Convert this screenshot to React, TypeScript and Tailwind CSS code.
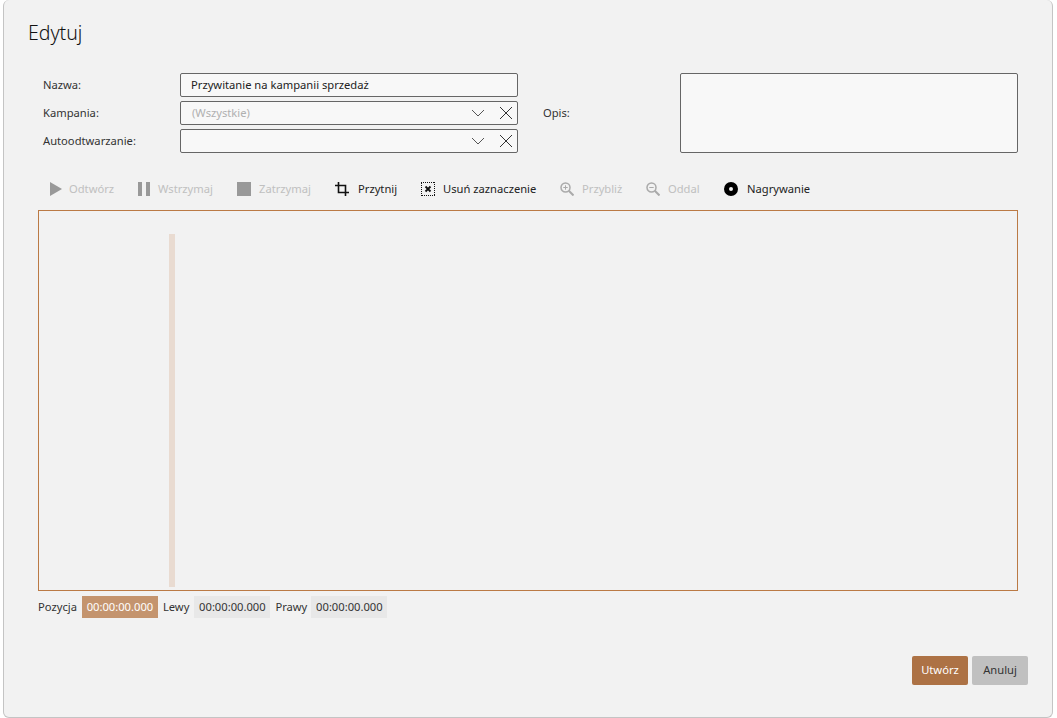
import type { ReactNode } from "react";

const FieldLabel = ({ children }: { children: ReactNode }) => (
  <span className="w-[137px] text-[11.2px] text-[#333]">{children}</span>
);

const ComboBox = ({ value }: { value?: string }) => (
  <div className="flex items-center h-[24px] w-[338px] rounded-[2px] border border-[#666] bg-[#f8f8f8] pl-[11px]">
    <span className="flex-1 text-[11.2px] text-[#b0b0b0]">{value}</span>
    <svg viewBox="0 0 14 14" className="w-[14px] h-[14px] mr-[14px]">
      <path d="M1 4l6 6 6-6" fill="none" stroke="#555" />
    </svg>
    <svg viewBox="0 0 14 14" className="w-[14px] h-[14px] mr-[4px]">
      <path d="M1 1l12 12M13 1L1 13" fill="none" stroke="#333" />
    </svg>
  </div>
);

const ToolButton = ({
  icon,
  label,
  disabled,
  className,
}: {
  icon: ReactNode;
  label: string;
  disabled?: boolean;
  className: string;
}) => (
  <div className={`flex items-center ${className}`}>
    {icon}
    <span className={`text-[11.2px] ${disabled ? "text-[#c0c0c0]" : "text-[#222]"}`}>{label}</span>
  </div>
);

const TimeBox = ({ value, active }: { value: string; active?: boolean }) => (
  <span
    className={`flex items-center justify-center w-[76px] h-[22px] text-[11.2px] ${
      active ? "bg-[#c4946e] text-white" : "bg-[#e8e8e8] text-[#333]"
    }`}
  >
    {value}
  </span>
);

const PlayIcon = () => (
  <svg viewBox="0 0 14 14" className="w-[14px] h-[14px] mr-[5px]">
    <path d="M0 0l12 7-12 7z" fill="#999" />
  </svg>
);

const PauseIcon = () => (
  <svg viewBox="0 0 14 14" className="w-[14px] h-[14px] mr-[6px]">
    <path d="M0 0h4v14H0zM8 0h4v14H8z" fill="#999" />
  </svg>
);

const StopIcon = () => (
  <svg viewBox="0 0 14 14" className="w-[14px] h-[14px] mr-[8px]">
    <rect width="14" height="14" fill="#999" />
  </svg>
);

const CropIcon = () => (
  <svg viewBox="0 0 14 14" className="w-[14px] h-[14px] mr-[9px]">
    <path d="M3.5 0v10.5H14M0 3.5h10.5V14" fill="none" stroke="#111" strokeWidth="1.6" />
  </svg>
);

const ClearSelectionIcon = () => (
  <svg viewBox="0 0 14 14" className="w-[14px] h-[14px] mr-[8px]">
    <path d="M0 .5h14M13.5 0v14M14 13.5H0M.5 14V0" fill="none" stroke="#111" strokeDasharray="1 1" />
    <path d="M4.5 4.5l5 5M9.5 4.5l-5 5" stroke="#111" strokeWidth="1.8" />
  </svg>
);

const ZoomIcon = ({ plus }: { plus?: boolean }) => (
  <svg viewBox="0 0 14 14" className="w-[14px] h-[14px] mr-[8px]">
    <circle cx="5.5" cy="5.5" r="4.5" fill="none" stroke="#aaa" strokeWidth="1.5" />
    <path d="M8.8 8.8L13.5 13.5" stroke="#aaa" strokeWidth="2" />
    <path d={plus ? "M3.3 5.5h4.4M5.5 3.3v4.4" : "M3.3 5.5h4.4"} stroke="#aaa" />
  </svg>
);

const RecordIcon = () => (
  <svg viewBox="0 0 14 14" className="w-[14px] h-[14px] mr-[9px]">
    <circle cx="7" cy="7" r="4.5" fill="none" stroke="#000" strokeWidth="5" />
  </svg>
);

export default function App() {
  return (
    <div
      className="h-[718px] w-[1057px] overflow-hidden bg-white pl-[3px] pr-[4px]"
      style={{ fontFamily: '"Noto Sans", sans-serif' }}
    >
      <div className="flex flex-col h-[718px] rounded-[6px] border-x border-b border-[#c4c4c4] bg-[#f2f2f2] pl-[34px] pr-[24px]">
        <h1 className="pt-[19px] -ml-[10px] h-[69px] text-[19.5px] leading-[28px] font-light text-[#111]">Edytuj</h1>

        <div className="flex ml-[5px] h-[84px] w-[975px]">
          <div className="flex flex-col gap-[4px] pt-[4px]">
            <div className="flex items-center">
              <FieldLabel>Nazwa:</FieldLabel>
              <div className="flex items-center h-[24px] w-[338px] rounded-[2px] border border-[#666] bg-[#f8f8f8] pl-[10px] text-[11.2px] text-[#222]">
                Przywitanie na kampanii sprzedaż
              </div>
            </div>
            <div className="flex items-center">
              <FieldLabel>Kampania:</FieldLabel>
              <ComboBox value="(Wszystkie)" />
            </div>
            <div className="flex items-center">
              <FieldLabel>Autoodtwarzanie:</FieldLabel>
              <ComboBox />
            </div>
          </div>
          <div className="flex items-center pt-[4px] ml-[25px] w-[137px] text-[11.2px] text-[#333]">Opis:</div>
          <div className="mt-[4px] h-[80px] w-[338px] rounded-[2px] border border-[#666] bg-[#f8f8f8]" />
        </div>

        <div className="flex items-center h-[57px] pt-[16px] pl-[12px]">
          <ToolButton disabled className="w-[88px]" label="Odtwórz" icon={<PlayIcon />} />
          <ToolButton disabled className="w-[99px]" label="Wstrzymaj" icon={<PauseIcon />} />
          <ToolButton disabled className="w-[98px]" label="Zatrzymaj" icon={<StopIcon />} />
          <ToolButton className="w-[86px]" label="Przytnij" icon={<CropIcon />} />
          <ToolButton className="w-[139px]" label="Usuń zaznaczenie" icon={<ClearSelectionIcon />} />
          <ToolButton disabled className="w-[86px]" label="Przybliż" icon={<ZoomIcon plus />} />
          <ToolButton disabled className="w-[78px]" label="Oddal" icon={<ZoomIcon />} />
          <ToolButton className="w-[100px]" label="Nagrywanie" icon={<RecordIcon />} />
        </div>

        <div className="h-[381px] w-[980px] border border-[#bb7a45] pt-[23px] pb-[3px] pl-[130px]">
          <div className="h-full w-[6px] bg-[#e9dbd1]" />
        </div>

        <div className="flex items-center gap-[5px] mt-[5px] h-[22px] text-[11.2px] text-[#333]">
          <span>Pozycja</span>
          <TimeBox value="00:00:00.000" active />
          <span>Lewy</span>
          <TimeBox value="00:00:00.000" />
          <span className="w-[31px]">Prawy</span>
          <TimeBox value="00:00:00.000" />
        </div>

        <div className="flex justify-end gap-[4px] mt-[38px]">
          <button className="h-[29px] w-[56px] rounded-[2px] bg-[#ad7245] text-[11.2px] text-white">Utwórz</button>
          <button className="h-[29px] w-[56px] rounded-[2px] bg-[#c0c0c0] text-[11.2px] text-[#333]">Anuluj</button>
        </div>
      </div>
    </div>
  );
}
